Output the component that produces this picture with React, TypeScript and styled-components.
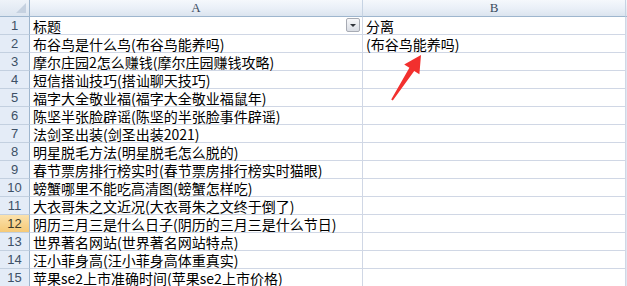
import React from 'react';
import styled, {createGlobalStyle} from 'styled-components';

const GlobalStyle = createGlobalStyle`
  html, body {
    margin: 0;
    padding: 0;
    background: #ffffff;
    overflow: hidden;
  }
`;

const Sheet = styled.div`
  position: relative;
  width: 627px;
  height: 286px;
  overflow: hidden;
  display: grid;
  grid-template-columns: 30px 333px 263px 1fr;
  grid-template-rows: 17px repeat(15, 18px);
  background: #dfe7f2;
  font-family: "Noto Sans CJK SC", "DejaVu Sans", sans-serif;
`;

const Corner = styled.div`
  position: relative;
  background: linear-gradient(#eef3f9, #dce5f0);
  border-right: 1px solid #9eb6ce;
  border-bottom: 1px solid #9eb6ce;
  &::after {
    content: '';
    position: absolute;
    right: 3px;
    bottom: 3px;
    border-left: 10px solid transparent;
    border-bottom: 10px solid #c5d1e0;
  }
`;

const ColHead = styled.div`
  display: flex;
  align-items: center;
  justify-content: center;
  background: linear-gradient(#f5f8fc 0%, #e9eff7 55%, #dbe4ef 100%);
  border-right: 1px solid #c6d3e3;
  border-bottom: 1px solid #9eb6ce;
  font-family: "Liberation Serif", serif;
  font-size: 13px;
  line-height: 14px;
  color: #3a4a5e;
`;

const Filler = styled.div<{$head?: boolean}>`
  background: ${p => (p.$head ? 'linear-gradient(#f5f8fc, #dbe4ef)' : '#dfe7f2')};
  border-bottom: ${p => (p.$head ? '1px solid #9eb6ce' : 'none')};
`;

const RowHead = styled.div<{$active?: boolean}>`
  display: flex;
  align-items: center;
  justify-content: center;
  background: ${p => (p.$active ? 'linear-gradient(#fbe2ad, #f5c977)' : '#e4ecf7')};
  border-right: 1px solid #9eb6ce;
  border-bottom: 1px solid #c3d0e0;
  font-family: "Liberation Sans", sans-serif;
  font-size: 13px;
  line-height: 15px;
  color: ${p => (p.$active ? '#3a3a2a' : '#3d5066')};
`;

const Cell = styled.div`
  position: relative;
  display: flex;
  align-items: center;
  padding: 1px 0 0 3px;
  background: #ffffff;
  border-right: 1px solid #d0d7e5;
  border-bottom: 1px solid #d0d7e5;
  font-size: 14px;
  line-height: 16px;
  color: #000000;
  white-space: nowrap;
  z-index: 1;
`;

const FilterButton = styled.span`
  position: absolute;
  right: 2px;
  top: 1px;
  width: 14px;
  height: 14px;
  box-sizing: border-box;
  border: 1px solid #a7abb4;
  border-radius: 2px;
  background: linear-gradient(#f7f8fa, #d9dde4);
  display: flex;
  align-items: center;
  justify-content: center;
  &::after {
    content: '';
    border-left: 3px solid transparent;
    border-right: 3px solid transparent;
    border-top: 3px solid #30343a;
    margin-top: 1px;
  }
`;

const Arrow = styled.svg`
  position: absolute;
  left: 0;
  top: 0;
  pointer-events: none;
  z-index: 5;
`;

const rows: [string, string][] = [
  ['标题', '分离'],
  ['布谷鸟是什么鸟(布谷鸟能养吗)', '(布谷鸟能养吗)'],
  ['摩尔庄园2怎么赚钱(摩尔庄园赚钱攻略)', ''],
  ['短信搭讪技巧(搭讪聊天技巧)', ''],
  ['福字大全敬业福(福字大全敬业福鼠年)', ''],
  ['陈坚半张脸辟谣(陈坚的半张脸事件辟谣)', ''],
  ['法剑圣出装(剑圣出装2021)', ''],
  ['明星脱毛方法(明星脱毛怎么脱的)', ''],
  ['春节票房排行榜实时(春节票房排行榜实时猫眼)', ''],
  ['螃蟹哪里不能吃高清图(螃蟹怎样吃)', ''],
  ['大衣哥朱之文近况(大衣哥朱之文终于倒了)', ''],
  ['阴历三月三是什么日子(阴历的三月三是什么节日)', ''],
  ['世界著名网站(世界著名网站特点)', ''],
  ['汪小菲身高(汪小菲身高体重真实)', ''],
  ['苹果se2上市准确时间(苹果se2上市价格)', ''],
];

const App = () => {
  return (
    <>
      <GlobalStyle/>
      <Sheet>
        <Corner/>
        <ColHead>A</ColHead>
        <ColHead>B</ColHead>
        <Filler $head/>
        {rows.map(([a, b], i) => (
          <React.Fragment key={i}>
            <RowHead $active={i === 11}>{i + 1}</RowHead>
            <Cell>
              {a}
              {i === 0 && <FilterButton/>}
            </Cell>
            <Cell>{b}</Cell>
            <Filler/>
          </React.Fragment>
        ))}
        <Arrow width="627" height="286" viewBox="0 0 627 286">
          <polygon
            points="421,55 419.4,74.2 414.2,71 392.8,100.6 391.2,99.4 409.4,67.8 404.2,64.4"
            fill="#f2302e"
          />
        </Arrow>
      </Sheet>
    </>
  );
};

export default App;
